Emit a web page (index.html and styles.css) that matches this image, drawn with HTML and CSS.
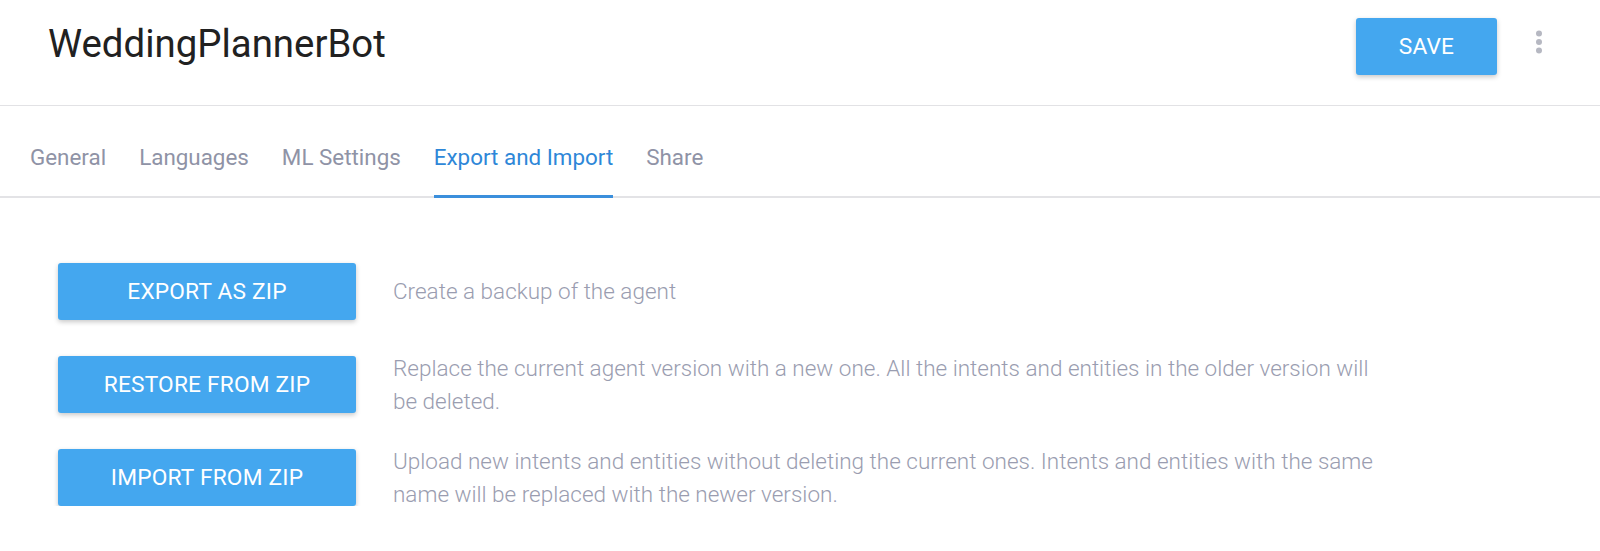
FILE: index.html
```html
<!DOCTYPE html>
<html lang="en">
<head>
<meta charset="utf-8">
<title>WeddingPlannerBot</title>
<link rel="stylesheet" href="styles.css">
</head>
<body>
<header class="header">
  <h1 class="title">WeddingPlannerBot</h1>
  <div class="actions">
    <button class="btn btn-save">SAVE</button>
    <button class="kebab" aria-label="More">
      <svg width="8" height="24" viewBox="0 0 8 24"><circle cx="4" cy="3.5" r="3" fill="#b6b8c2"/><circle cx="4" cy="12" r="3" fill="#b6b8c2"/><circle cx="4" cy="20.5" r="3" fill="#b6b8c2"/></svg>
    </button>
  </div>
</header>
<nav class="tabs">
  <a class="tab">General</a>
  <a class="tab">Languages</a>
  <a class="tab">ML Settings</a>
  <a class="tab active">Export and Import</a>
  <a class="tab">Share</a>
</nav>
<main class="content">
  <div class="row">
    <button class="btn btn-action">EXPORT AS ZIP</button>
    <p class="desc">Create a backup of the agent</p>
  </div>
  <div class="row">
    <button class="btn btn-action">RESTORE FROM ZIP</button>
    <p class="desc">Replace the current agent version with a new one. All the intents and entities in the older version will be deleted.</p>
  </div>
  <div class="row">
    <button class="btn btn-action">IMPORT FROM ZIP</button>
    <p class="desc">Upload new intents and entities without deleting the current ones. Intents and entities with the same name will be replaced with the newer version.</p>
  </div>
</main>
</body>
</html>
```

FILE: styles.css
```css
* { box-sizing: border-box; }
html, body { margin: 0; padding: 0; background: #fff; }
body { font-family: Roboto, "Noto Sans", "Liberation Sans", sans-serif; }

.header {
  display: flex;
  align-items: center;
  justify-content: space-between;
  padding: 18px 57px 30px 48px;
  border-bottom: 1px solid #e2e2e5;
}
.title {
  margin: 0 0 6px 0;
  font-size: 38.4px;
  font-weight: 400;
  color: #212121;
  line-height: 44px;
}
.actions {
  display: flex;
  align-items: center;
  gap: 38px;
}
.btn {
  border: none;
  border-radius: 3px;
  background: #44a7ef;
  color: #fff;
  font-family: Roboto, "Noto Sans", sans-serif;
  font-size: 22.7px;
  font-weight: 400;
  letter-spacing: 0.2px;
  box-shadow: 0 2px 5px rgba(0,0,0,0.22);
  cursor: pointer;
}
.btn-save {
  width: 141px;
  height: 57px;
}
.kebab {
  border: none;
  background: none;
  padding: 0;
  margin-bottom: 9px;
  display: flex;
}

.tabs {
  display: flex;
  gap: 33px;
  padding-left: 30px;
  border-bottom: 2px solid #e3e3e6;
}
.tab {
  display: block;
  padding: 37px 0 24px;
  margin-bottom: -2px;
  border-bottom: 3px solid transparent;
  font-size: 22.4px;
  line-height: 28px;
  color: #8f93a6;
  cursor: pointer;
}
.tab.active {
  color: #2e87d8;
  border-bottom-color: #3b8fdc;
}

.content {
  padding: 65px 0 0 58px;
  display: flex;
  flex-direction: column;
  gap: 36px;
}
.row {
  display: flex;
  align-items: center;
  gap: 37px;
  height: 57px;
}
.btn-action {
  flex: 0 0 298px;
  height: 57px;
}
.desc {
  margin: 0;
  max-width: 995px;
  font-size: 22.5px;
  line-height: 33px;
  font-weight: 300;
  color: #9a9db0;
}
```
